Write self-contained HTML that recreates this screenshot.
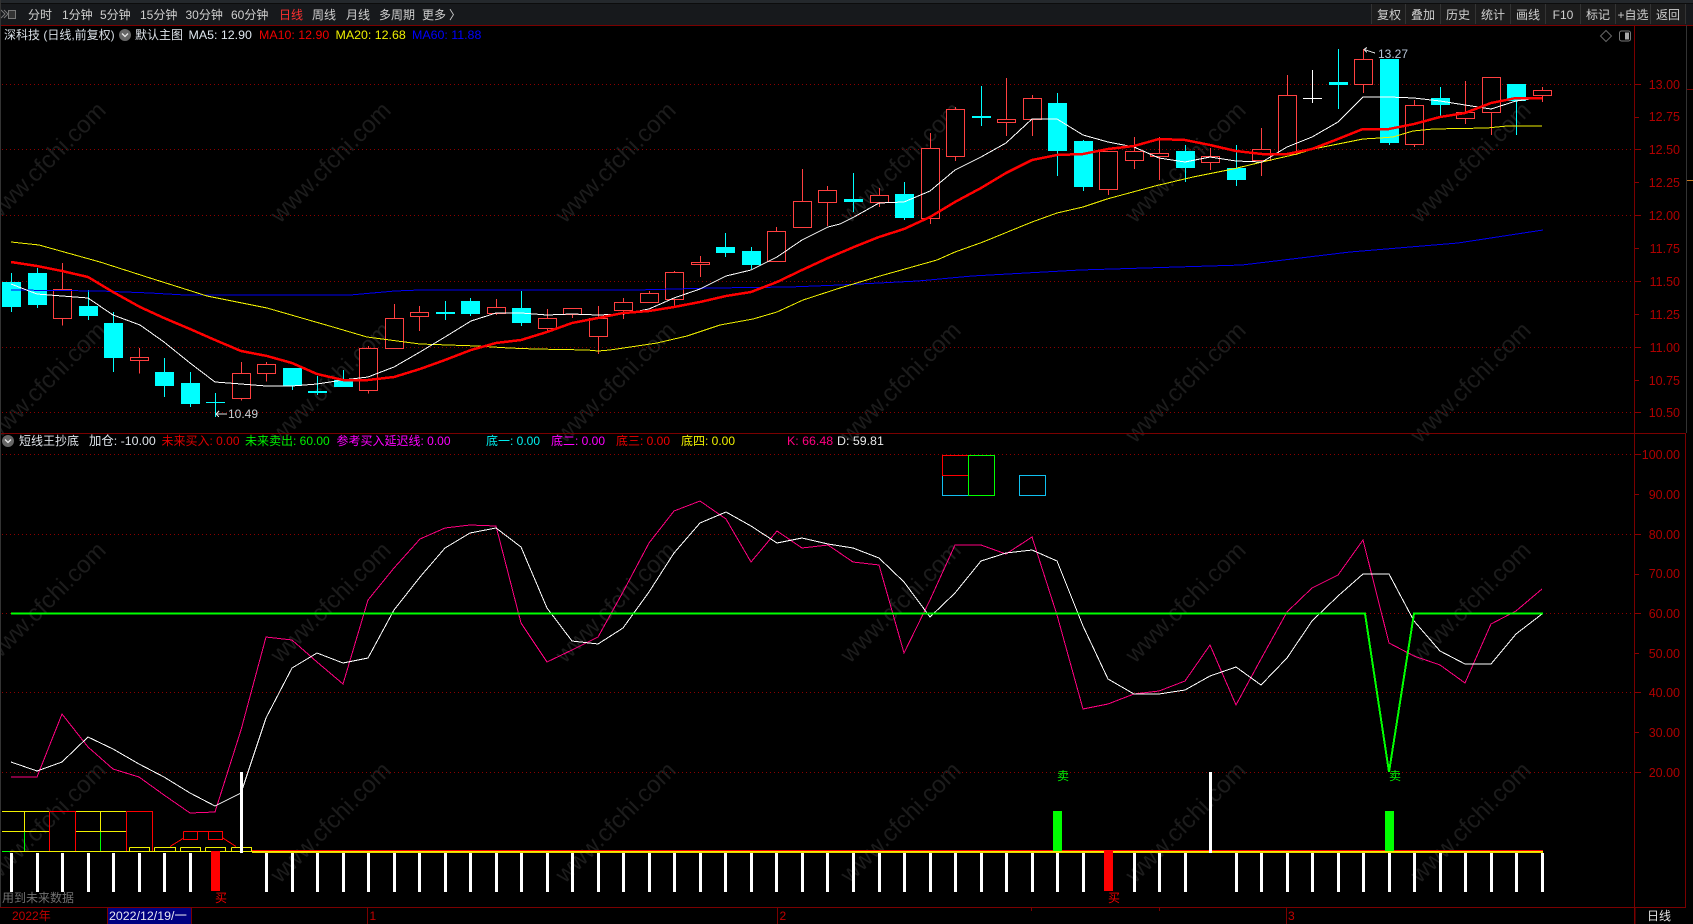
<!DOCTYPE html>
<html lang="zh"><head><meta charset="utf-8"><title>深科技</title>
<style>
html,body{margin:0;padding:0;background:#000;width:1693px;height:924px;overflow:hidden}
svg{display:block}
text{font-family:"Liberation Sans","Noto Sans CJK SC",sans-serif;font-size:12px}
.wm text{font-size:24px;fill:#1c1c1c}
.ax text{fill:#b00000;text-anchor:end;font-size:12.5px}
.tb text{fill:#cfcfcf}
.btn text{fill:#cfcfcf;text-anchor:middle}
.lt{font-size:12.4px}
</style></head><body>
<svg xmlns="http://www.w3.org/2000/svg" width="1693" height="924" viewBox="0 0 1693 924">
<rect width="1693" height="924" fill="#000"/>
<!-- watermark -->
<g class="wm">
<text transform="translate(-5 224) rotate(-45)">www.cfchi.com</text><text transform="translate(280 224) rotate(-45)">www.cfchi.com</text><text transform="translate(565 224) rotate(-45)">www.cfchi.com</text><text transform="translate(850 224) rotate(-45)">www.cfchi.com</text><text transform="translate(1135 224) rotate(-45)">www.cfchi.com</text><text transform="translate(1420 224) rotate(-45)">www.cfchi.com</text>
<text transform="translate(-5 444) rotate(-45)">www.cfchi.com</text><text transform="translate(280 444) rotate(-45)">www.cfchi.com</text><text transform="translate(565 444) rotate(-45)">www.cfchi.com</text><text transform="translate(850 444) rotate(-45)">www.cfchi.com</text><text transform="translate(1135 444) rotate(-45)">www.cfchi.com</text><text transform="translate(1420 444) rotate(-45)">www.cfchi.com</text>
<text transform="translate(-5 664) rotate(-45)">www.cfchi.com</text><text transform="translate(280 664) rotate(-45)">www.cfchi.com</text><text transform="translate(565 664) rotate(-45)">www.cfchi.com</text><text transform="translate(850 664) rotate(-45)">www.cfchi.com</text><text transform="translate(1135 664) rotate(-45)">www.cfchi.com</text><text transform="translate(1420 664) rotate(-45)">www.cfchi.com</text>
<text transform="translate(-5 884) rotate(-45)">www.cfchi.com</text><text transform="translate(280 884) rotate(-45)">www.cfchi.com</text><text transform="translate(565 884) rotate(-45)">www.cfchi.com</text><text transform="translate(850 884) rotate(-45)">www.cfchi.com</text><text transform="translate(1135 884) rotate(-45)">www.cfchi.com</text><text transform="translate(1420 884) rotate(-45)">www.cfchi.com</text>
</g>
<!-- toolbar -->
<rect x="0" y="0" width="1693" height="25" fill="#17191c"/>
<rect x="0" y="0" width="1693" height="3" fill="#24282c"/>
<rect x="0" y="3" width="1693" height="1" fill="#0c0c0c"/>
<g class="tb">
<text x="28" y="19">分时</text><text x="62" y="19">1分钟</text><text x="100" y="19">5分钟</text><text x="140" y="19">15分钟</text><text x="185.500" y="19">30分钟</text><text x="231" y="19">60分钟</text><text x="279" y="19" style="fill:#ff3030">日线</text><text x="312" y="19">周线</text><text x="346" y="19">月线</text><text x="379" y="19">多周期</text><text x="422" y="19">更多</text><text x="449" y="19">〉</text>
</g>
<path d="M1 10l4 4-4 4M4 10l4 4-4 4" fill="none" stroke="#777"/><rect x="8.500" y="10.500" width="7" height="8" fill="#333" stroke="#777"/>
<g shape-rendering="crispEdges">
<rect x="1372" y="4" width="314" height="20" fill="#1c1c1c"/>
<path d="M1371.500 4V24M1405.500 4V24M1440.500 4V24M1475.500 4V24M1510.500 4V24M1545.500 4V24M1580.500 4V24M1615.500 4V24M1650.500 4V24M1685.500 4V24" stroke="#333"/>
</g>
<g class="btn">
<text x="1389" y="19">复权</text><text x="1423" y="19">叠加</text><text x="1458" y="19">历史</text><text x="1493" y="19">统计</text><text x="1528" y="19">画线</text><text x="1563" y="19">F10</text><text x="1598" y="19">标记</text><text x="1633" y="19">+自选</text><text x="1668" y="19">返回</text>
</g>
<!-- legend row 1 -->
<text x="4" y="39" fill="#d8dfe6">深科技 (日线,前复权)</text>
<circle cx="125" cy="35" r="6" fill="#666"/><path d="M122 33.500l3 3 3-3" fill="none" stroke="#e8e8e8" stroke-width="1.300"/>
<text x="135" y="39" fill="#dfe4ea">默认主图</text>
<text class="lt" x="188.500" y="39" fill="#dfe8f0">MA5: 12.90</text>
<text class="lt" x="259" y="39" fill="#f00000">MA10: 12.90</text>
<text class="lt" x="335.500" y="39" fill="#f0f000">MA20: 12.68</text>
<text class="lt" x="412" y="39" fill="#0000ff">MA60: 11.88</text>
<path d="M1606 30.500l5.500 5.500-5.500 5.500-5.500-5.500z" fill="none" stroke="#666"/>
<rect x="1619.500" y="31" width="11" height="10" rx="2" fill="none" stroke="#777"/><rect x="1625" y="32.500" width="4" height="7" fill="#aaa"/>
<!-- grids -->
<g shape-rendering="crispEdges" fill="none">
<path d="M2 84.500H1634M2 149.500H1634M2 215.500H1634M2 281.500H1634M2 347.500H1634M2 412.500H1634M2 454.500H1634M2 534.500H1634M2 613.500H1634M2 692.500H1634M2 772.500H1634" stroke="#8c0000" stroke-dasharray="1 3"/>
<path d="M0 433.500H1686M0 907.500H1686M1634.500 25V924M0 25.500H1693" stroke="#7a0000"/>
<path d="M1686.500 25V433" stroke="#333"/><path d="M1685.500 433V907" stroke="#7a0000"/><path d="M0.500 0V907" stroke="#333"/>
<path d="M1635 84.500h6M1635 117.500h4M1635 149.500h6M1635 182.500h4M1635 215.500h6M1635 248.500h4M1635 281.500h6M1635 314.500h4M1635 347.500h6M1635 380.500h4M1635 412.500h6M1635 454.500h6M1635 494.500h4M1635 534.500h6M1635 574.500h4M1635 613.500h6M1635 653.500h4M1635 692.500h6M1635 732.500h4M1635 772.500h6" stroke="#8c0000"/>
<path d="M1687 89.500h6" stroke="#7a0000"/><path d="M1687 180.500h6" stroke="#c87820"/>
</g>
<g class="ax">
<text x="1680" y="89">13.00</text><text x="1680" y="121">12.75</text><text x="1680" y="154">12.50</text><text x="1680" y="187">12.25</text><text x="1680" y="220">12.00</text><text x="1680" y="253">11.75</text><text x="1680" y="286">11.50</text><text x="1680" y="319">11.25</text><text x="1680" y="352">11.00</text><text x="1680" y="385">10.75</text><text x="1680" y="417">10.50</text>
<text x="1680" y="459">100.00</text><text x="1680" y="499">90.00</text><text x="1680" y="539">80.00</text><text x="1680" y="578">70.00</text><text x="1680" y="618">60.00</text><text x="1680" y="658">50.00</text><text x="1680" y="697">40.00</text><text x="1680" y="737">30.00</text><text x="1680" y="777">20.00</text>
</g>
<!-- candles -->
<g shape-rendering="crispEdges">
<path fill="none" stroke="#0ff" d="M11.500 273V312M37.500 268V308M88.500 290V320M113.500 312V372M164.500 358V397M190.500 372V407M292.500 368V390M343.500 370V387M470.500 298V316M521.500 291V326M725.500 233V257M751.500 247V269M853.500 173V212M904.500 182V220M981.500 86V126M1057.500 93V176M1083.500 140V191M1185.500 145V182M1236.500 145V186M1338.500 49V109M1389.500 59V145M1440.500 87V117M1516.500 84V135M215.500 393V417M206 402.500H225M317.500 376V395M308 391.500H327M445.500 301V320"/>
<path fill="#0ff" d="M2 282h19v25H2zM28 273h19v32H28zM79 306h19v10H79zM104 323h19v35H104zM155 372h19v14H155zM181 383h19v21H181zM283 368h19v18H283zM334 380h19v7H334zM461 301h19v13H461zM512 308h19v15H512zM716 247h19v6H716zM742 251h19v14H742zM844 199h19v3H844zM895 194h19v24H895zM972 116h19v2H972zM1048 103h19v48H1048zM1074 141h19v46H1074zM1176 151h19v17H1176zM1227 168h19v12H1227zM1329 82h19v3H1329zM1380 59h19v84H1380zM1431 98h19v7H1431zM1507 84h19v17H1507zM308 391h19v2H308zM436 312h19v2H436z"/>
<path fill="none" stroke="#fff" d="M1312.500 70V103M1303 98.500H1322"/>
<path fill="#000" stroke="#ff4040" d="M62.500 263V289.500M62.500 318.500V325.500M53.500 289.500H71.500V318.500H53.500Z
M139.500 348V357.500M139.500 360.500V373.500M130.500 357.500H148.500V360.500H130.500Z
M241.500 362V373.500M241.500 398.500V400.500M232.500 373.500H250.500V398.500H232.500Z
M266.500 362V364.500M266.500 373.500V381.500M257.500 364.500H275.500V373.500H257.500Z
M368.500 346V348.500M368.500 390.500V393.500M359.500 348.500H377.500V390.500H359.500Z
M394.500 304V318.500M385.500 318.500H403.500V348.500H385.500Z
M419.500 306V312.500M419.500 316.500V331M410.500 312.500H428.500V316.500H410.500Z
M496.500 299V307.500M496.500 313.500V315M487.500 307.500H505.500V313.500H487.500Z
M547.500 309V318.500M547.500 328.500V331M538.500 318.500H556.500V328.500H538.500Z
M572.500 314.500V318M563.500 308.500H581.500V314.500H563.500Z
M598.500 306V318.500M598.500 336.500V354M589.500 318.500H607.500V336.500H589.500Z
M623.500 298V302.500M623.500 310.500V319M614.500 302.500H632.500V310.500H614.500Z
M649.500 291V293.500M640.500 293.500H658.500V302.500H640.500Z
M674.500 271V272.500M674.500 299.500V307M665.500 272.500H683.500V299.500H665.500Z
M700.500 256V262.500M700.500 264.500V277M691.500 262.500H709.500V264.500H691.500Z
M776.500 227V231.500M767.500 231.500H785.500V261.500H767.500Z
M802.500 169V201.500M793.500 201.500H811.500V227.500H793.500Z
M827.500 186V190.500M827.500 202.500V226M818.500 190.500H836.500V202.500H818.500Z
M879.500 188V195.500M879.500 202.500V207M870.500 195.500H888.500V202.500H870.500Z
M930.500 133V148.500M930.500 218.500V224M921.500 148.500H939.500V218.500H921.500Z
M955.500 107V109.500M955.500 156.500V161M946.500 109.500H964.500V156.500H946.500Z
M1006.500 78V119.500M1006.500 122.500V136M997.500 119.500H1015.500V122.500H997.500Z
M1032.500 95V98.500M1032.500 119.500V136M1023.500 98.500H1041.500V119.500H1023.500Z
M1108.500 189.500V195M1099.500 151.500H1117.500V189.500H1099.500Z
M1134.500 137V151.500M1134.500 160.500V169M1125.500 151.500H1143.500V160.500H1125.500Z
M1159.500 137V153.500M1159.500 156.500V180M1150.500 153.500H1168.500V156.500H1150.500Z
M1210.500 148V156.500M1210.500 162.500V170M1201.500 156.500H1219.500V162.500H1201.500Z
M1261.500 128V149.500M1261.500 160.500V176M1252.500 149.500H1270.500V160.500H1252.500Z
M1287.500 75V95.500M1278.500 95.500H1296.500V154.500H1278.500Z
M1363.500 49V59.500M1363.500 84.500V93M1354.500 59.500H1372.500V84.500H1354.500Z
M1414.500 100V105.500M1414.500 144.500V147M1405.500 105.500H1423.500V144.500H1405.500Z
M1465.500 81V112.500M1465.500 118.500V124M1456.500 112.500H1474.500V118.500H1456.500Z
M1491.500 112.500V135M1482.500 77.500H1500.500V112.500H1482.500Z
M1542.500 87V90.500M1542.500 95.500V102M1533.500 90.500H1551.500V95.500H1533.500Z"/>
<!-- MA -->
<polyline fill="none" stroke="#0000f0" points="11,290 100,291 150,293 185,295 350,295 395,291 420,290 636,290 713,288 790,287 840,285 918,281 972,276 1080,270 1242,265 1350,252 1458,243 1543,230"/>
<polyline fill="none" stroke="#f0f000" points="11,242 39,245 100,262 150,278 207,296 267,308 333,327 367,337 420,344 477,346 509,348 535,349 587,350 598,351 610,350 637,346 657,343 687,336 720,325 753,319 777,312 803,300 840,288 880,276 937,260 955,252 983,242 1032,222 1057,213 1083,207 1107,199 1155,186 1193,177 1233,169 1262,162 1297,154 1313,149 1363,139 1380,138 1393,137 1413,131 1433,129 1487,128 1507,126 1542,126"/>
<polyline fill="none" stroke="#fff" points="11,284 37,294 62,296 88,298 113,315 140,325 164,342 190,363 215,382 241,384 266,386 292,386 317,384 343,380 368,377 394,367 420,352 445,337 471,321 496,313 521,313 547,315 572,314 598,315 623,314 649,309 674,298 700,289 726,276 751,270 777,257 802,240 828,227 840,224 854,217 879,203 904,202 930,191 955,170 981,157 1006,143 1032,119 1057,119 1083,135 1108,142 1134,147 1159,158 1185,162 1210,157 1236,161 1262,162 1287,147 1312,137 1338,122 1363,97 1389,97 1414,98 1440,101 1465,105 1491,109 1516,101 1530,99"/>
<polyline fill="none" stroke="#f00" stroke-width="2.500" points="11,262 37,266 62,271 88,277 113,292 140,307 164,318 190,329 215,340 241,351 267,356 292,363 317,374 343,380 368,380 394,377 420,369 445,360 471,350 496,343 521,340 547,332 572,323 598,318 623,313 649,311 674,307 700,302 726,296 751,292 777,282 802,270 828,258 854,247 879,237 904,229 930,217 955,202 981,188 1006,173 1032,160 1057,155 1083,154 1108,149 1134,146 1159,139 1185,140 1210,145 1236,151 1262,154 1287,154 1312,149 1338,139 1363,129 1389,129 1414,124 1440,117 1465,113 1491,103 1516,98 1542,98"/>
<!-- high/low markers -->
<path fill="none" stroke="#ddd" d="M1375 53L1364 49.500M1364 49.500l3-2M1364 49.500l3 3M216 414H227M216 414l3-3M216 414l3 3"/>
<!-- sub indicator boxes -->
<path fill="none" stroke="#10c0f0" d="M942.500 475.500V495.500H968.500M1019.500 475.500H1045.500V495.500H1019.500Z"/>
<path fill="none" stroke="#f00" d="M968.500 455.500H942.500V475.500H968.500"/>
<path fill="none" stroke="#0f0" d="M968.500 455.500H994.500V495.500H968.500Z"/>
<!-- KD -->
<polyline fill="none" stroke="#ff0080" points="11,777 37,777 62,714 88,747 113,769 139,777 164,795 190,813 215,812 241,730 266,637 292,640 317,662 343,684 368,600 394,568 420,539 445,528 470,525 496,526 521,623 547,662 572,650 598,637 623,592 649,543 674,511 700,501 726,519 751,562 777,531 802,548 828,545 853,562 879,565 904,653 930,600 955,545 981,545 1006,554 1032,537 1057,615 1083,709 1108,704 1134,694 1159,691 1185,681 1210,645 1236,705 1261,659 1287,612 1312,588 1338,575 1363,540 1389,643 1414,656 1440,665 1465,683 1491,624 1516,611 1542,589"/>
<polyline fill="none" stroke="#fff" points="11,762 37,771 62,762 88,737 113,749 139,764 164,777 190,793 215,806 241,793 266,718 292,668 317,653 343,663 368,658 394,610 420,577 445,548 470,533 496,528 521,547 547,608 572,641 598,644 623,628 649,592 674,553 700,523 726,512 751,526 777,543 802,538 828,544 853,548 879,558 904,582 930,617 955,593 981,561 1006,553 1032,550 1057,561 1083,626 1108,679 1134,694 1159,694 1185,690 1210,676 1236,667 1261,685 1287,658 1312,621 1338,596 1363,574 1389,574 1414,621 1440,651 1465,664 1491,664 1516,634 1542,614"/>
<polyline fill="none" stroke="#0f0" stroke-width="2" points="11,613.500 1365,613.500 1389,772 1414,613.500 1543,613.500"/>
<!-- bottom signal -->
<path fill="none" stroke="#f0f000" d="M2 811.500H49M2 831.500H49M75.500 811.500H126M75.500 831.500H126M24.500 811.500V831.500M100.500 811.500V831.500"/>
<path fill="none" stroke="#0f0" d="M24.500 832V851M100.500 832V851"/>
<path fill="none" stroke="#f00" d="M49.500 811.500H75.500V851M49.500 811.500V851M126.500 811.500H152.500V851M126.500 811.500V851M183.500 831.500H222.500V839.500H208.500V831.500M183.500 831.500V839.500H197.500V831.500M170 846.500L183 838.500M222 837.500L236 846.500"/>
<path fill="none" stroke="#f0f000" d="M129.500 847.500H149.500V851M129.500 847.500V851M154.500 847.500H175.500V851M154.500 847.500V851M180.500 847.500H200.500V851M180.500 847.500V851M205.500 847.500H225.500V851M205.500 847.500V851M231.500 847.500H251.500V851M231.500 847.500V851"/>
<rect x="252" y="850" width="1291" height="1" fill="#f00"/>
<rect x="2" y="851" width="8" height="1" fill="#0f0"/>
<rect x="10" y="851" width="1533" height="1" fill="#f0f000"/>
<rect x="252" y="852" width="1291" height="1" fill="#f0d000"/>
<path fill="#fff" d="M10 853h3v39h-3zM36 853h3v39h-3zM61 853h3v39h-3zM87 853h3v39h-3zM112 853h3v39h-3zM138 853h3v39h-3zM163 853h3v39h-3zM189 853h3v39h-3zM265 853h3v39h-3zM291 853h3v39h-3zM316 853h3v39h-3zM342 853h3v39h-3zM367 853h3v39h-3zM393 853h3v39h-3zM418 853h3v39h-3zM444 853h3v39h-3zM469 853h3v39h-3zM495 853h3v39h-3zM520 853h3v39h-3zM546 853h3v39h-3zM571 853h3v39h-3zM597 853h3v39h-3zM622 853h3v39h-3zM648 853h3v39h-3zM673 853h3v39h-3zM699 853h3v39h-3zM724 853h3v39h-3zM750 853h3v39h-3zM775 853h3v39h-3zM801 853h3v39h-3zM826 853h3v39h-3zM852 853h3v39h-3zM878 853h3v39h-3zM903 853h3v39h-3zM929 853h3v39h-3zM954 853h3v39h-3zM980 853h3v39h-3zM1005 853h3v39h-3zM1031 853h3v39h-3zM1056 853h3v39h-3zM1082 853h3v39h-3zM1133 853h3v39h-3zM1158 853h3v39h-3zM1184 853h3v39h-3zM1235 853h3v39h-3zM1260 853h3v39h-3zM1286 853h3v39h-3zM1311 853h3v39h-3zM1337 853h3v39h-3zM1362 853h3v39h-3zM1388 853h3v39h-3zM1413 853h3v39h-3zM1439 853h3v39h-3zM1464 853h3v39h-3zM1490 853h3v39h-3zM1515 853h3v39h-3zM1541 853h3v39h-3z"/>
<rect x="240" y="772" width="3" height="81" fill="#fff"/>
<rect x="1209" y="772" width="3" height="81" fill="#fff"/>
<rect x="211" y="851" width="9" height="40" fill="#f00"/>
<rect x="1104" y="851" width="9" height="40" fill="#f00"/>
<rect x="1053" y="811" width="9" height="40" fill="#0f0"/>
<rect x="1385" y="811" width="9" height="40" fill="#0f0"/>
<!-- bottom ticks -->
<path fill="none" stroke="#7a0000" d="M107.500 908V924M191.500 908V924M367.500 908V924M777.500 908V924M1286.500 908V924M1031.500 908V911M1159.500 908V911M1635 908V924"/>
<rect x="108" y="908" width="83" height="16" fill="#000080"/>
</g>
<!-- labels -->
<text x="1378" y="58" fill="#b8c6d8">13.27</text>
<text x="228" y="418" fill="#c8ccd0">10.49</text>
<circle cx="8" cy="441" r="6" fill="#666"/><path d="M5 439.500l3 3 3-3" fill="none" stroke="#e8e8e8" stroke-width="1.300"/>
<text x="19" y="445" fill="#dfe4ea">短线王抄底</text>
<text class="lt" x="89" y="445" fill="#dfe4ea">加仓: -10.00</text>
<text x="161.500" y="445" fill="#e00000">未来买入: 0.00</text>
<text x="245" y="445" fill="#00f000">未来卖出: 60.00</text>
<text x="336.500" y="445" fill="#ff00ff">参考买入延迟线: 0.00</text>
<text x="486" y="445" fill="#00f0f0">底一: 0.00</text>
<text x="551" y="445" fill="#ff00ff">底二: 0.00</text>
<text x="616" y="445" fill="#f00000">底三: 0.00</text>
<text x="681" y="445" fill="#f0f000">底四: 0.00</text>
<text class="lt" x="787" y="445" fill="#ff0080">K: 66.48</text>
<text class="lt" x="837" y="445" fill="#e8e8e8">D: 59.81</text>
<text x="1057" y="780" fill="#00f000">卖</text>
<text x="1389" y="780" fill="#00f000">卖</text>
<text x="215" y="902" fill="#f00000">买</text>
<text x="1108" y="902" fill="#f00000">买</text>
<text x="2" y="902" fill="#707070">用到未来数据</text>
<text x="12" y="920" fill="#c00000">2022年</text>
<text class="lt" x="109" y="920" fill="#e6e6f0">2022/12/19/一</text>
<text x="369.500" y="920" fill="#c00000">1</text>
<text x="779.500" y="920" fill="#c00000">2</text>
<text x="1288" y="920" fill="#c00000">3</text>
<text x="1647" y="920" fill="#e0e0e0">日线</text>
</svg>
</body></html>
